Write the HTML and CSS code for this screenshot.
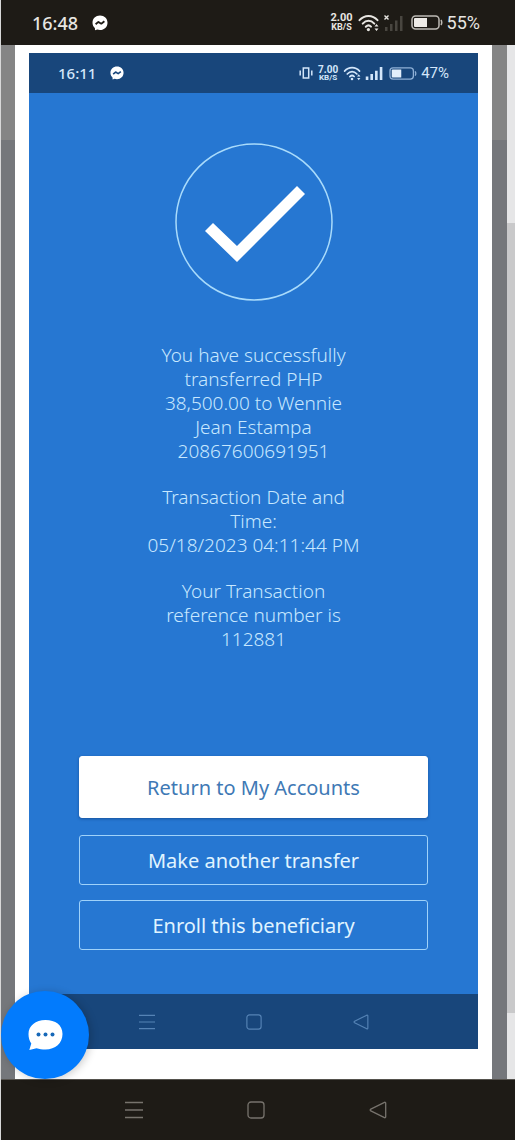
FILE: index.html
```html
<!DOCTYPE html>
<html lang="en">
<head>
<meta charset="utf-8">
<meta name="viewport" content="width=device-width, initial-scale=1">
<title>Transfer successful</title>
<link rel="stylesheet" href="styles.css">
</head>
<body>
<svg class="defs" aria-hidden="true">
  <symbol id="messenger" viewBox="0 0 16 16">
    <path fill="#fff" d="M8 .5C3.700.5.5 3.600.5 7.700c0 2.200.9 4.100 2.400 5.400l.1 2.200 2.300-.7c.8.200 1.700.4 2.700.4 4.300 0 7.500-3.100 7.500-7.300S12.300.5 8 .5z"/>
    <path fill="none" stroke="currentColor" stroke-width="1.800" stroke-linejoin="round" d="M3.600 9.300 6.400 6.900 9.300 8.700 12.400 6.300"/>
  </symbol>
  <symbol id="wifi" viewBox="0 0 22 18">
    <g fill="none" stroke="currentColor" stroke-width="2" stroke-linecap="round">
      <path d="M1.500 6.200C6.500.6 14.500.6 19.500 6.200"/>
      <path d="M4.700 9.600C8.200 5.900 12.800 5.900 16.300 9.600"/>
      <path d="M7.800 12.800C9.600 11 11.400 11 13 12.600"/>
    </g>
    <circle cx="10.400" cy="15.600" r="1.600" fill="currentColor"/>
    <path fill="currentColor" d="m18.500 10 2 2.600h-4zM18.500 17l2-2.600h-4z"/>
  </symbol>
  <symbol id="bars" viewBox="0 0 20 16">
    <path fill="currentColor" d="M0 12h3v4H0zM5.300 9h3v7h-3zM10.600 5.500h3V16h-3zM16 1h3v15h-3z"/>
  </symbol>
  <symbol id="nav-menu" viewBox="0 0 18 18">
    <path fill="none" stroke="currentColor" stroke-width="1.300" d="M0 1.500h18M0 9h18M0 16.500h18"/>
  </symbol>
  <symbol id="nav-home" viewBox="0 0 18 18">
    <rect x="1" y="1" width="16" height="16" rx="3" fill="none" stroke="currentColor" stroke-width="1.300"/>
  </symbol>
  <symbol id="nav-back" viewBox="0 0 18 18">
    <path fill="none" stroke="currentColor" stroke-width="1.300" stroke-linejoin="round" d="M15.500 1.300 1.800 8.100q-1.200.9 0 1.800l13.700 6.800q1.200.3 1.200-1V2.300q0-1.300-1.200-1z"/>
  </symbol>
</svg>

<header class="status">
  <span class="clock">16:48</span>
  <svg class="messenger"><use href="#messenger"/></svg>
  <span class="spacer"></span>
  <span class="speed"><span>2.00</span><span class="unit">KB/S</span></span>
  <svg class="wifi"><use href="#wifi"/></svg>
  <svg class="no-signal" viewBox="0 0 20 16">
    <path fill="#494640" d="M1 12h2.500v4H1zM6 9h2.500v7H6zM11 5.500h2.500V16H11zM16 1h2.500v15H16z"/>
    <path stroke="#e8e6e2" stroke-width="1.400" d="m.5.500 4 4m0-4-4 4"/>
  </svg>
  <svg class="battery" viewBox="0 0 32 15">
    <rect x="1" y="1" width="27" height="13" rx="3.500" fill="none" stroke="#bdbab5" stroke-width="1.500"/>
    <path fill="#eeebe7" d="M4 3h12v9H4q-1 0-1-1V4q0-1 1-1z"/>
    <path fill="none" stroke="#bdbab5" stroke-width="1.500" d="M30 5q1.500 2.500 0 5"/>
  </svg>
  <span class="percent">55%</span>
</header>

<main class="viewer">
  <div class="paper">
    <section class="screen">
      <div class="status status-inner">
        <span class="clock">16:11</span>
        <svg class="messenger"><use href="#messenger"/></svg>
        <span class="spacer"></span>
        <svg class="vibrate" viewBox="0 0 14 12">
          <path fill="none" stroke="currentColor" stroke-width="1.500" d="M4.300 1h5.400v10H4.300zM1.200 3.500v5M12.800 3.500v5"/>
        </svg>
        <span class="speed"><span>7.00</span><span class="unit">KB/S</span></span>
        <svg class="wifi"><use href="#wifi"/></svg>
        <svg class="signal"><use href="#bars"/></svg>
        <svg class="battery" viewBox="0 0 32 15">
          <rect x="1" y="1" width="27" height="13" rx="3.500" fill="none" stroke="#8fb0d6" stroke-width="1.500"/>
          <path fill="#e3effb" d="M4 3h10v9H4q-1 0-1-1V4q0-1 1-1z"/>
          <path fill="none" stroke="#8fb0d6" stroke-width="1.500" d="M30 5q1.500 2.500 0 5"/>
        </svg>
        <span class="percent">47%</span>
      </div>
      <div class="receipt">
        <svg class="check" viewBox="0 0 158 158" role="img" aria-label="Success">
          <circle cx="79" cy="79" r="78" fill="none" stroke="#a9dbfb" stroke-width="1.500"/>
          <path fill="#fff" d="m30 88 8-8 24 23 60-60 8 8-68 68z"/>
        </svg>
        <div class="message">
          <p>You have successfully<br>transferred PHP<br>38,500.00 to Wennie<br>Jean Estampa<br>20867600691951</p>
          <p>Transaction Date and<br>Time:<br>05/18/2023 04:11:44 PM</p>
          <p>Your Transaction<br>reference number is<br>112881</p>
        </div>
        <div class="actions">
          <button class="btn btn-primary" type="button">Return to My Accounts</button>
          <button class="btn" type="button">Make another transfer</button>
          <button class="btn" type="button">Enroll this beneficiary</button>
        </div>
      </div>
      <div class="softkeys softkeys-inner">
        <svg><use href="#nav-menu"/></svg>
        <svg><use href="#nav-home"/></svg>
        <svg><use href="#nav-back"/></svg>
      </div>
    </section>
  </div>
  <div class="track"><div class="thumb"></div></div>
  <button class="chat" type="button" aria-label="Open chat">
    <svg viewBox="0 0 36 32">
      <path fill="#fff" d="M18.500 1C8.600 1 1.500 6.800 1.500 15c0 3.900 1 6.800 2.800 9.400L2.300 31l7.200-1.700c2.700.9 5.700 1.200 9 1.200 9.900 0 17-6.300 17-15.500S28.400 1 18.500 1z"/>
      <g fill="#1768b8"><circle cx="11.500" cy="15.500" r="2"/><circle cx="18.500" cy="15.500" r="2"/><circle cx="25.500" cy="15.500" r="2"/></g>
    </svg>
  </button>
</main>

<nav class="softkeys" aria-label="System">
  <button type="button" aria-label="Recent apps"><svg><use href="#nav-menu"/></svg></button>
  <button type="button" aria-label="Home"><svg><use href="#nav-home"/></svg></button>
  <button type="button" aria-label="Back"><svg><use href="#nav-back"/></svg></button>
</nav>
</body>
</html>
```
FILE: styles.css
```css
* {
  box-sizing: border-box;
}

body {
  margin: 0;
  min-height: 100vh;
  display: flex;
  flex-direction: column;
  background: #1e1b16;
  border-left: 1px solid #d8d8d8;
  font-family: "Noto Sans", "Open Sans", sans-serif;
}

svg {
  display: block;
  flex: none;
}

button {
  margin: 0;
  padding: 0;
  border: 0;
  background: none;
  color: inherit;
  font: inherit;
}

.defs {
  position: absolute;
  width: 0;
  height: 0;
}

/* Status bars */
.status {
  display: flex;
  align-items: center;
  height: 45px;
  padding: 0 35px 0 31px;
  background: #1e1b16;
  color: #e8e6e2;
}

.spacer {
  flex: 1;
}

.clock {
  font-size: 18px;
  font-weight: 500;
}

.messenger {
  width: 16px;
  height: 16px;
  margin-left: 14px;
  color: #1e1b16;
}

.speed {
  display: flex;
  flex-direction: column;
  align-items: center;
  font-family: Roboto, sans-serif;
  font-size: 11px;
  font-weight: 700;
  line-height: 10px;
}

.speed .unit {
  font-size: 9px;
  line-height: 9px;
}

.wifi {
  width: 22px;
  height: 18px;
  margin-left: 5px;
}

.no-signal {
  width: 20px;
  height: 16px;
  margin-left: 4px;
}

.battery {
  width: 32px;
  height: 15px;
  margin: 0 4px 0 7px;
}

.percent {
  font-family: Roboto, sans-serif;
  font-size: 18px;
}

.status-inner {
  height: 40px;
  padding: 0 29px;
  background: #18467b;
  color: #d3e6fa;
}

.status-inner .clock {
  font-size: 15px;
}

.status-inner .messenger {
  width: 14px;
  height: 14px;
  color: #18467b;
}

.status-inner .speed {
  font-size: 10px;
  line-height: 9px;
}

.status-inner .speed .unit {
  font-size: 8px;
  line-height: 8px;
}

.status-inner .wifi {
  width: 19px;
  height: 15px;
}

.status-inner .percent {
  font-size: 15px;
}

.vibrate {
  width: 14px;
  height: 12px;
  margin-right: 5px;
}

.signal {
  width: 19px;
  height: 14px;
  margin-left: 3px;
}

.status-inner .battery {
  width: 28px;
  height: 13px;
  margin: 0 4px 0 5px;
}

/* Document viewer */
.viewer {
  position: relative;
  flex: 1;
  display: flex;
  background: linear-gradient(#858585 95px, #75777b 95px);
}

.paper {
  flex: 1;
  display: flex;
  margin: 0 15px 0 14px;
  padding: 8px 14px 30px;
  background: #fff;
}

.screen {
  flex: 1;
  display: flex;
  flex-direction: column;
  background: #2677d2;
}

.track {
  display: flex;
  width: 8px;
  padding: 178px 0 66px;
  background: #e6e6e7;
}

.thumb {
  flex: 1;
  background: #c9c9ca;
}

/* Receipt */
.receipt {
  flex: 1;
  display: flex;
  flex-direction: column;
  padding: 50px 50px 44px;
}

.check {
  width: 158px;
  height: 158px;
  align-self: center;
}

.message {
  display: flex;
  flex-direction: column;
  gap: 22px;
  margin: 42px 0 auto;
  color: #c8e8ff;
  font-size: 19px;
  font-weight: 300;
  line-height: 24px;
  text-align: center;
}

.message p {
  margin: 0;
}

.actions {
  display: flex;
  flex-direction: column;
  gap: 15px;
}

.btn {
  height: 50px;
  border: 1px solid #9fd2fa;
  border-radius: 3px;
  color: #e0f4ff;
  font-size: 20px;
}

.btn-primary {
  height: 62px;
  margin-bottom: 2px;
  border-color: #fff;
  background: #fff;
  box-shadow: 0 1px 3px rgba(0, 30, 80, 0.4);
  color: #4079b5;
}

/* Navigation keys */
.softkeys {
  display: flex;
  align-items: center;
  justify-content: center;
  gap: 104px;
  height: 61px;
  padding-right: 4px;
  border-top: 1px solid #55524d;
  color: #77736d;
}

.softkeys svg {
  width: 18px;
  height: 18px;
}

.softkeys-inner {
  gap: 91px;
  height: 55px;
  padding: 0;
  border: 0;
  background: #18467b;
  color: #5583b5;
}

.softkeys-inner svg {
  width: 16px;
  height: 16px;
}

/* Chat bubble */
.chat {
  position: absolute;
  left: 0;
  bottom: 0;
  display: grid;
  place-items: center;
  width: 88px;
  height: 88px;
  border-radius: 50%;
  background: #027bfd;
  box-shadow: 2px 1px 8px rgba(0, 0, 0, 0.2);
}

.chat svg {
  width: 36px;
  height: 32px;
}
```
